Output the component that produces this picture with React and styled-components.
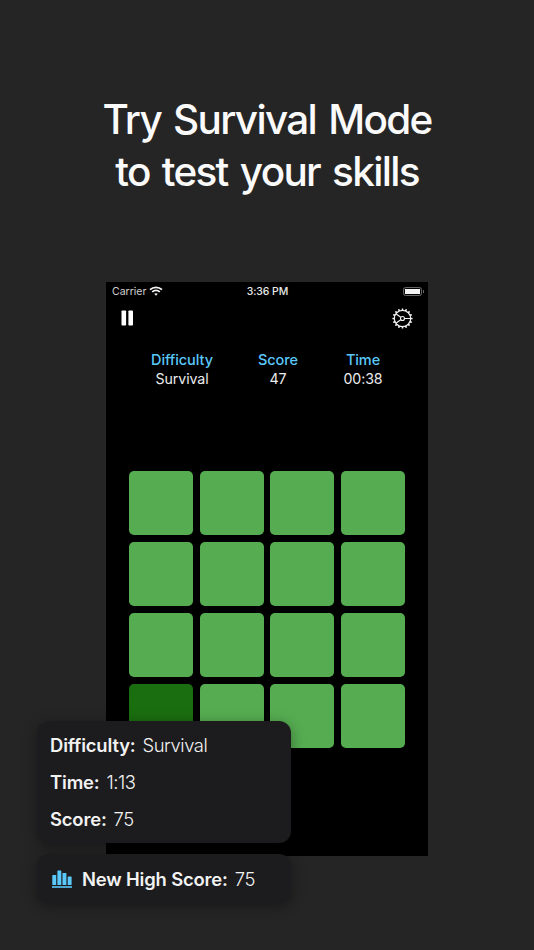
import React from "react";
import styled, { createGlobalStyle } from "styled-components";

const Global = createGlobalStyle`
  html, body { margin: 0; padding: 0; background: #252525; }
  body { font-family: Inter, "Liberation Sans", sans-serif; }
`;

const Page = styled.div`
  position: relative;
  width: 534px;
  height: 950px;
  overflow: hidden;
  background: #252525;
  display: flex;
  flex-direction: column;
  align-items: center;
  padding-top: 94px;
  box-sizing: border-box;
`;

const Headline = styled.h1`
  margin: 0;
  font-size: 40.5px;
  line-height: 52px;
  font-weight: 450;
  letter-spacing: -1.7px;
  word-spacing: 3px;
  color: #fafafa;
  text-align: center;
`;

const Phone = styled.div`
  margin-top: 84px;
  width: 322px;
  height: 574px;
  background: #000;
  display: flex;
  flex-direction: column;
`;

const StatusBar = styled.div`
  height: 18px;
  padding: 0 5px 0 6px;
  display: grid;
  grid-template-columns: 1fr auto 1fr;
  align-items: center;
  color: #e8e8e8;
  font-size: 10.5px;
`;

const Carrier = styled.div`
  display: flex;
  align-items: center;
  gap: 3px;
  color: #cfcfcf;
`;

const Clock = styled.div`
  font-weight: 500;
  letter-spacing: -0.1px;
`;

const Battery = styled.div`
  position: relative;
  justify-self: end;
  width: 15px;
  height: 5px;
  background: #f4f4f4;
  border-radius: 1.5px;
  border: 1px solid #000;
  outline: 1px solid #666;
  margin-right: 2px;

  &::after {
    content: "";
    position: absolute;
    right: -4px;
    top: 1px;
    width: 1px;
    height: 3px;
    background: #666;
  }
`;

const Toolbar = styled.div`
  height: 36px;
  padding: 0 15px;
  display: flex;
  align-items: center;
  justify-content: space-between;
`;

const Stats = styled.div`
  margin-top: 14px;
  padding-left: 45px;
  padding-right: 45px;
  display: grid;
  grid-template-columns: 62px 1fr 40px;
  justify-items: center;
`;

const Stat = styled.div`
  display: flex;
  flex-direction: column;
  align-items: center;
`;

const StatLabel = styled.div`
  color: #5ac8fa;
  font-size: 14.5px;
  line-height: 19px;
  font-weight: 500;
  letter-spacing: -0.1px;
`;

const StatValue = styled.div`
  color: #ececec;
  font-size: 14.2px;
  line-height: 20px;
  font-weight: 400;
  letter-spacing: -0.1px;
`;

const Board = styled.div`
  margin: 82px 0 0 23px;
  display: grid;
  grid-template-columns: repeat(4, 64px);
  grid-auto-rows: 64px;
  gap: 7px 6.67px;
`;

const Tile = styled.div`
  border-radius: 5px;
  background: ${(p) => (p.$active ? "#1b6e10" : "#56ad51")};
`;

const Card = styled.div`
  position: absolute;
  left: 37px;
  width: 254px;
  box-sizing: border-box;
  background: #1c1c1e;
  border-radius: 12px;
  box-shadow: 0 3px 14px rgba(0, 0, 0, 0.38);
`;

const ResultCard = styled(Card)`
  top: 721px;
  height: 122px;
  padding: 6px 13px;
  display: flex;
  flex-direction: column;
  justify-content: space-around;
`;

const HighScoreCard = styled(Card)`
  top: 854px;
  height: 49px;
  padding: 0 15px;
  display: flex;
  align-items: center;
  gap: 10px;
`;

const Row = styled.div`
  display: flex;
  align-items: baseline;
  gap: 7px;
  font-size: 18.4px;
  letter-spacing: -0.15px;
  color: #f2f2f2;
`;

const Key = styled.span`
  font-weight: 600;
`;

const Value = styled.span`
  font-weight: 300;
  letter-spacing: -0.45px;
`;

const Wifi = () => (
  <svg width="14" height="10" viewBox="0 0 14 10" fill="none" stroke="#f4f4f4" strokeWidth="1.8">
    <path d="M1 3.6C4.4 .5 9.6 .5 13 3.6" />
    <path d="M3.2 5.9c2.2-1.9 5.4-1.9 7.6 0" />
    <path d="M7 9.7 5.2 7.8c1-.8 2.6-.8 3.6 0Z" fill="#f4f4f4" stroke="none" />
  </svg>
);

const Pause = () => (
  <svg width="13" height="16" viewBox="0 0 13 16" fill="#fff">
    <rect x="0.5" y="0.5" width="4.6" height="15" rx="0.8" />
    <rect x="7.4" y="0.5" width="4.6" height="15" rx="0.8" />
  </svg>
);

const Gear = () => {
  const teeth = Array.from({ length: 16 }, (_, i) => (i * 360) / 16);
  return (
    <svg width="21" height="21" viewBox="0 0 21 21" fill="none" stroke="#f2f2f2">
      <circle cx="10.5" cy="10.5" r="8.2" strokeWidth="1.2" />
      {teeth.map((a) => (
        <rect key={a} x="9.7" y="0.4" width="1.6" height="2.2" rx="0.4" fill="#f2f2f2" stroke="none" transform={`rotate(${a} 10.5 10.5)`} />
      ))}
      <circle cx="10.5" cy="10.5" r="2" strokeWidth="1.1" />
      <path d="M4.2 6 8.8 9.3M4.2 15 8.8 11.7M12.5 10.5H18.4" strokeWidth="1.1" />
    </svg>
  );
};

const Bars = () => (
  <svg width="20" height="18" viewBox="0 0 20 18" fill="#5ac8fa">
    <rect x="0.3" y="5" width="3.9" height="10" rx="0.6" />
    <rect x="5.4" y="0.5" width="3.9" height="14.5" rx="0.6" />
    <rect x="10.5" y="3" width="3.9" height="12" rx="0.6" />
    <rect x="15.7" y="6.5" width="3.9" height="8.5" rx="0.6" />
    <rect x="0" y="16.2" width="20" height="1.6" />
  </svg>
);

export default function App() {
  return (
    <Page>
      <Global />
      <Headline>
        Try Survival Mode
        <br />
        to test your skills
      </Headline>
      <Phone>
        <StatusBar>
          <Carrier>
            Carrier <Wifi />
          </Carrier>
          <Clock>3:36 PM</Clock>
          <Battery />
        </StatusBar>
        <Toolbar>
          <Pause />
          <Gear />
        </Toolbar>
        <Stats>
          <Stat>
            <StatLabel>Difficulty</StatLabel>
            <StatValue>Survival</StatValue>
          </Stat>
          <Stat>
            <StatLabel>Score</StatLabel>
            <StatValue>47</StatValue>
          </Stat>
          <Stat>
            <StatLabel>Time</StatLabel>
            <StatValue>00:38</StatValue>
          </Stat>
        </Stats>
        <Board>
          {Array.from({ length: 16 }, (_, i) => (
            <Tile key={i} $active={i === 12} />
          ))}
        </Board>
      </Phone>
      <ResultCard>
        <Row>
          <Key>Difficulty:</Key>
          <Value>Survival</Value>
        </Row>
        <Row>
          <Key>Time:</Key>
          <Value>1:13</Value>
        </Row>
        <Row>
          <Key>Score:</Key>
          <Value>75</Value>
        </Row>
      </ResultCard>
      <HighScoreCard>
        <Bars />
        <Row>
          <Key>New High Score:</Key>
          <Value>75</Value>
        </Row>
      </HighScoreCard>
    </Page>
  );
}
